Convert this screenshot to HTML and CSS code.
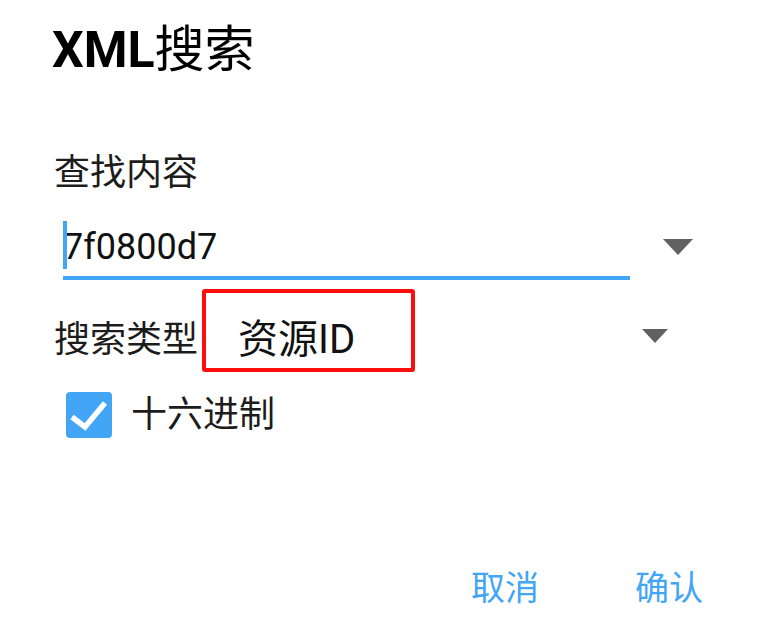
FILE: index.html
```html
<!DOCTYPE html>
<html>
<head>
<meta charset="utf-8">
<link rel="stylesheet" href="styles.css">
</head>
<body>
<div class="dialog">
  <div class="title">XML<span class="cjk">搜索</span></div>
  <div class="label">查找内容</div>
  <div class="input-row">
    <div class="field">
      <span class="cursor"></span>
      <span class="value">7f0800d7</span>
    </div>
    <svg class="tri1" width="30" height="16" viewBox="0 0 30 16"><polygon points="0,0 30,0 15,16" fill="#616161"/></svg>
  </div>
  <div class="select-row">
    <div class="select-label">搜索类型</div>
    <div class="select-box"><span class="select-value">资源ID</span></div>
    <svg class="tri2" width="26" height="14" viewBox="0 0 26 14"><polygon points="0,0 26,0 13,14" fill="#616161"/></svg>
  </div>
  <div class="check-row">
    <svg class="checkbox" width="46" height="46" viewBox="0 0 46 46"><rect x="0" y="0" width="46" height="46" rx="4" fill="#42a5f5"/><polyline points="6,25 19,35 39,11" fill="none" stroke="#fff" stroke-width="5.5"/></svg>
    <span class="check-label">十六进制</span>
  </div>
  <div class="buttons">
    <span class="btn">取消</span>
    <span class="btn">确认</span>
  </div>
</div>
</body>
</html>
```

FILE: styles.css
```css
html, body {
  margin: 0;
  padding: 0;
  background: #fff;
}
body {
  width: 782px;
  height: 628px;
  overflow: hidden;
  font-family: Roboto, "Noto Sans CJK SC", sans-serif;
  color: #1c1c1c;
}
.dialog {
  padding: 25px 0 0 54px;
}
.title {
  font-size: 50px;
  line-height: 50px;
  height: 50px;
  font-weight: 700;
  color: #000;
  margin-left: -2px;
}
.title .cjk {
  font-weight: 400;
}
.label {
  margin-top: 80px;
  font-size: 36px;
  line-height: 36px;
  height: 36px;
}
.input-row {
  display: flex;
  align-items: flex-start;
  margin-top: 30px;
}
.field {
  position: relative;
  margin-left: 9px;
  width: 567px;
  height: 55px;
  border-bottom: 4px solid #42a5f5;
}
.cursor {
  position: absolute;
  left: 0;
  top: 0;
  width: 4px;
  height: 48px;
  background: #42a5f5;
}
.value {
  display: block;
  padding-top: 2px;
  font-size: 36px;
  line-height: 48px;
  color: #111;
}
.tri1 {
  margin-left: 33px;
  margin-top: 18px;
}
.select-row {
  display: flex;
  align-items: flex-start;
  margin-top: 9px;
  height: 83px;
}
.select-label {
  font-size: 36px;
  line-height: 36px;
  margin-top: 33px;
  width: 148px;
}
.select-box {
  box-sizing: border-box;
  width: 213px;
  height: 83px;
  border: 4px solid #ff0d0d;
  border-radius: 3px;
  padding: 19px 0 0 32px;
  display: flex;
  align-items: center;
}
.select-value {
  font-size: 40px;
  line-height: 40px;
  color: #111;
}
.tri2 {
  margin-left: 227px;
  margin-top: 40px;
}
.check-row {
  display: flex;
  align-items: center;
  margin-top: 20px;
  margin-left: 12px;
  height: 46px;
}
.check-label {
  margin-left: 19px;
  font-size: 36px;
  line-height: 36px;
}
.buttons {
  display: flex;
  justify-content: flex-end;
  gap: 96px;
  margin-top: 126px;
  padding-right: 79px;
  margin-left: -54px;
}
.btn {
  font-size: 34px;
  line-height: 48px;
  color: #42a5f5;
}
```
